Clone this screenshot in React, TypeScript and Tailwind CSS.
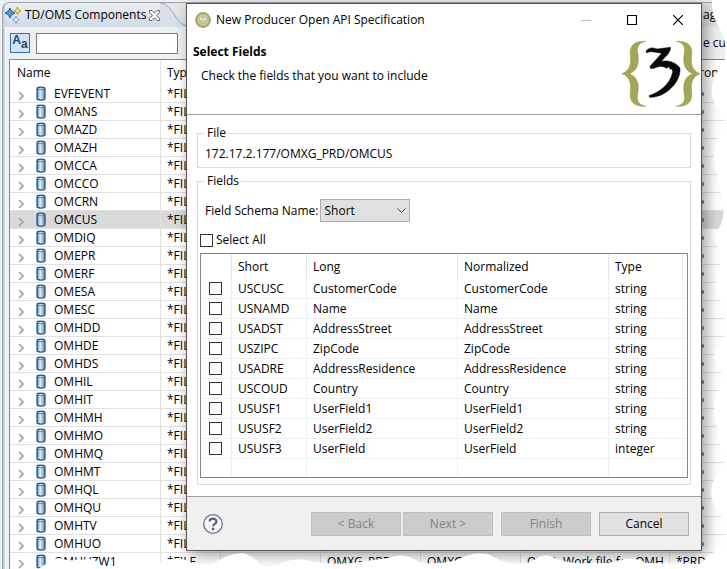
import { useState } from 'react';

const components = [
  'EVFEVENT', 'OMANS', 'OMAZD', 'OMAZH', 'OMCCA', 'OMCCO', 'OMCRN', 'OMCUS', 'OMDIQ',
  'OMEPR', 'OMERF', 'OMESA', 'OMESC', 'OMHDD', 'OMHDE', 'OMHDS', 'OMHIL', 'OMHIT',
  'OMHMH', 'OMHMO', 'OMHMQ', 'OMHMT', 'OMHQL', 'OMHQU', 'OMHTV', 'OMHUO', 'OMHUZW1',
];

const fields = [
  { short: 'USCUSC', long: 'CustomerCode', type: 'string' },
  { short: 'USNAMD', long: 'Name', type: 'string' },
  { short: 'USADST', long: 'AddressStreet', type: 'string' },
  { short: 'USZIPC', long: 'ZipCode', type: 'string' },
  { short: 'USADRE', long: 'AddressResidence', type: 'string' },
  { short: 'USCOUD', long: 'Country', type: 'string' },
  { short: 'USUSF1', long: 'UserField1', type: 'string' },
  { short: 'USUSF2', long: 'UserField2', type: 'string' },
  { short: 'USUSF3', long: 'UserField', type: 'integer' },
];

const checkCls = 'block w-[13px] h-[13px] shrink-0 appearance-none border border-[#333] bg-white checked:bg-[#333]';
const cellCls = 'border-r border-b border-[#e0e0e0] pl-1.5 whitespace-nowrap overflow-hidden';
const gridCls = 'border-r border-b border-[#ecf0f2] pl-1.5 whitespace-nowrap';
const buttonCls = 'w-[90px] h-6 border border-[#adadad] bg-[#e1e1e1] text-black disabled:border-[#bfbfbf] disabled:bg-[#cccccc] disabled:text-[#838383]';

function SparkIcon() {
  return (
    <svg width="17" height="18" viewBox="0 0 17 18" className="shrink-0">
      <path d="M5 2 L6.500 5 L10 7 L6.500 9 L5 12 L3.500 9 L0 7 L3.500 5 Z" fill="#5f93cc" stroke="#1f4f86" strokeWidth=".9" />
      <path d="M12.500 1 L13.500 3.500 L16 4.800 L13.500 6 L12.500 8.500 L11.500 6 L9 4.800 L11.500 3.500 Z" fill="#fbe48f" stroke="#b58a22" strokeWidth=".9" />
      <path d="M11 10 L12 12.500 L14.500 13.700 L12 15 L11 17.500 L10 15 L7.500 13.700 L10 12.500 Z" fill="#fff" stroke="#6a9cc9" strokeWidth=".9" />
    </svg>
  );
}

function CloseTabIcon() {
  return (
    <svg width="11" height="11" viewBox="0 0 11 11">
      <path d="M.5 .5 H3 L5.500 3.200 L8 .5 H10.500 V2.500 L7.700 5.500 L10.500 8.500 V10.500 H8 L5.500 7.800 L3 10.500 H.5 V8.500 L3.300 5.500 L.5 2.500 Z" fill="#fff" stroke="#555" strokeWidth=".9" />
    </svg>
  );
}

function FileIcon() {
  return (
    <svg width="10" height="15" viewBox="0 0 10 15" className="shrink-0">
      <defs>
        <linearGradient id="cyl">
          <stop offset="0" stopColor="#4f83b0" />
          <stop offset=".4" stopColor="#e2f0f8" />
          <stop offset="1" stopColor="#4f86b3" />
        </linearGradient>
      </defs>
      <path d="M1 2.500 C1 .6 9 .6 9 2.500 V12.500 C9 14.600 1 14.600 1 12.500 Z" fill="url(#cyl)" stroke="#234f7d" strokeWidth="1.200" />
      <path d="M1.500 3 C3 4 7 4 8.500 3" fill="none" stroke="#41719d" strokeWidth=".8" />
    </svg>
  );
}

function ExpandIcon() {
  return (
    <svg width="6" height="10" viewBox="0 0 6 10" className="shrink-0">
      <path d="M1 1 L5 5 L1 9" fill="none" stroke="#a2a2a2" strokeWidth="1.600" />
    </svg>
  );
}

function AppIcon() {
  return (
    <svg width="16" height="16" viewBox="0 0 16 16" className="shrink-0">
      <circle cx="8" cy="8" r="6.900" fill="#c6c99c" stroke="#a4a763" strokeWidth="2" />
      <path d="M4.500 5.500 C6 4.500 7.500 5.500 8 7.500 C8.500 5.500 10 4.500 11.500 5.500 C11.300 7.200 10.200 8.600 8.600 8.800 L9 11.500 H7 L7.400 8.800 C5.800 8.600 4.700 7.200 4.500 5.500 Z" fill="#f1f2e2" stroke="#a4a763" strokeWidth=".6" />
    </svg>
  );
}

const brace = 'M71 4 C39 3 22 15 25 44 C27 66 28 90 0 101 C28 112 27 136 25 158 C22 187 39 200 71 199 C53 194 43 186 47 164 C52 136 48 110 22 101 C48 92 52 66 47 38 C43 18 53 8 71 4 Z';

function Logo() {
  return (
    <svg width="78" height="68" viewBox="0 0 234 204" className="shrink-0">
      <g fill="#a6a555" stroke="#8f904c" strokeWidth="1.500">
        <path d={brace} />
        <path d={brace} transform="translate(234 0) scale(-1 1)" />
      </g>
      <path d="M72 33 C80 23 92 21 105 27 L145 22 C147 27 143 33 140 40 L118 64 C140 60 160 66 174 84 C177 112 156 142 130 158 C115 168 97 172 83 172 L81 167 C110 158 142 136 151 100 C154 90 150 86 144 87 L140 80 L134 85 C122 76 108 79 99 84 L86 86 L84 79 L119 40 L101 37 C90 33 80 36 73 38 Z" fill="#0a0a0a" stroke="#0a0a0a" strokeWidth="1.500" />
    </svg>
  );
}

// White paper with a ragged border, laid over the right and bottom sides
function TornEdges() {
  return (
    <>
      <svg className="absolute right-0 top-0 w-8 h-full pointer-events-none" viewBox="0 0 32 569" preserveAspectRatio="none">
        <path d="M17 0 C16 20 25 25 27 34 C31 42 32 54 29 62 C20 74 17 80 17 92 C18 106 26 112 30 119 C29 130 20 138 19 157 C20 170 27 185 26 200 Q31 214 26 224 Q19 236 22 244 Q28 260 24 270 Q18 284 23 294 Q29 308 30 327 Q31 340 20 352 Q18 358 25 368 Q30 380 23 391 Q17 402 20 416 Q23 440 29 458 Q32 466 20 477 Q13 494 20 508 Q29 516 31 534 L31 548 Q20 550 12 557 L0 569 H32 V0 Z" fill="#fff" />
      </svg>
      <svg className="absolute left-0 bottom-0 w-full h-[19px] pointer-events-none" viewBox="0 0 727 19" preserveAspectRatio="none">
        <path d="M38 19 L46 14 Q52 8 60 8 Q66 11 75 10 L94 9 Q100 18 118 18 Q140 15 160 12 Q175 6 186 10 Q202 18 214 13 Q230 3 242 3 Q252 5 260 14 Q268 20 280 14 Q295 7 310 11 Q330 15 352 13 L388 8 Q402 3 412 8 Q420 15 436 13 Q455 13 466 6 Q478 1 490 5 Q505 15 520 14 Q532 13 538 7 Q548 3 556 9 Q570 14 590 13 Q612 14 624 9 Q638 8 646 13 L700 14 Q712 8 727 0 V19 Z" fill="#fff" />
      </svg>
    </>
  );
}

function ComponentsView() {
  const [filter, setFilter] = useState('');

  return (
    <div className="pl-0.5 pt-0.5 bg-[#f0f0f0]">
      <div className="rounded-tl-lg border-l border-t border-[#9aa3ab] bg-[#c4d1de] pl-0.5 overflow-hidden">
        <div className="flex h-6 bg-[#e3e5e7]">
          <div className="flex items-center gap-[3px] bg-linear-to-b from-[#eceff2] to-[#cfdae6]">
            <SparkIcon />
            <h2>TD/OMS Components</h2>
            <button aria-label="Close view"><CloseTabIcon /></button>
          </div>
          <svg width="32" height="24" viewBox="0 0 32 24" className="shrink-0">
            <path d="M0 0 C13 0 15 24 32 24 H0 Z" fill="#d8e0e9" />
            <path d="M0 0 C13 0 15 24 32 24" fill="none" stroke="#9aa3ab" />
          </svg>
          <span className="ml-auto self-center w-6">ag</span>
        </div>

        <div className="flex items-center gap-1.5 h-8 border-l border-white bg-[#eef0f2] pl-1">
          <button aria-label="Match case" className="flex justify-center w-5 h-5 shrink-0 border border-[#2f6fae] bg-[#cfe3f5] text-[12px] leading-3 text-[#26425f] font-['Liberation_Sans',sans-serif] font-bold">
            <span>A</span>
            <span className="pt-1">a</span>
          </button>
          <input aria-label="Filter components" value={filter} onChange={e => setFilter(e.target.value)}
            className="w-[142px] h-[21px] border border-[#7a7a7a] bg-white px-1 outline-none" />
          <span className="ml-auto w-6 whitespace-nowrap">e cu</span>
        </div>

        <div className="border-l border-white bg-[#eef0f2] pl-[3px]">
          <div className="border-l border-t border-[#828790] bg-white">
            <table className="w-full table-fixed border-separate border-spacing-0">
              <colgroup>
                <col className="w-[151px]" />
                <col className="w-[60px]" />
                <col className="w-[100px]" />
                <col className="w-[100px]" />
                <col className="w-[100px]" />
                <col />
                <col className="w-[57px]" />
              </colgroup>
              <thead>
                <tr className="h-[25px] text-left">
                  <th className="border-r border-[#e5e5e5] pl-[7px] font-normal">Name</th>
                  <th className="border-r border-[#e5e5e5] pl-1.5 font-normal">Type</th>
                  <th /><th /><th /><th />
                  <th className="pl-1.5 font-normal">Environ</th>
                </tr>
              </thead>
              <tbody>
                {components.map((name, i) => {
                  const last = i === components.length - 1;
                  return (
                    <tr key={name} className={name === 'OMCUS' ? 'h-[18px] bg-[#d9d9d9]' : 'h-[18px]'}>
                      <td className="border-r border-b border-[#e0e0e0] pl-2">
                        <div className="flex items-center h-[17px]">
                          <span className="pt-1"><ExpandIcon /></span>
                          <span className="ml-3 mr-2"><FileIcon /></span>
                          {name}
                        </div>
                      </td>
                      <td className={cellCls}>*FILE</td>
                      <td className={cellCls}>{last && 'PF'}</td>
                      <td className={cellCls}>{last && 'OMXG_PRD'}</td>
                      <td className={cellCls}>{last && 'OMXG'}</td>
                      <td className={cellCls}>{last && <>OMH <span className="ml-1">Work file for OMH</span></>}</td>
                      <td className="border-b border-[#e0e0e0] pl-1.5">
                        {last ? '*PRD' : <span className="block w-[3px] h-1 ml-[25px] rounded-sm bg-[#4a94b8]" />}
                      </td>
                    </tr>
                  );
                })}
              </tbody>
            </table>
          </div>
        </div>
      </div>
    </div>
  );
}

function SpecificationDialog() {
  const [schema, setSchema] = useState('Short');
  const [checked, setChecked] = useState<string[]>([]);

  const toggle = (id: string) =>
    setChecked(c => (c.includes(id) ? c.filter(x => x !== id) : [...c, id]));
  const toggleAll = () =>
    setChecked(c => (c.length === fields.length ? [] : fields.map(f => f.short)));

  return (
    <div role="dialog" aria-labelledby="dialog-title"
      className="absolute left-[186px] right-[25px] top-[3px] border border-[#555] bg-white shadow-[4px_4px_14px_rgba(0,0,0,0.4)]">
      <div className="flex items-center h-[31px] pl-2">
        <AppIcon />
        <h1 id="dialog-title" className="ml-[5px]">New Producer Open API Specification</h1>
        <div className="ml-auto flex items-center gap-9 pr-[18px]">
          <button aria-label="Minimize" disabled>
            <svg width="10" height="10"><path d="M0 5.500 H10" stroke="#bbb" /></svg>
          </button>
          <button aria-label="Maximize">
            <svg width="10" height="10"><path d="M.5 .5 H9.500 V9.500 H.5 Z" fill="none" stroke="#000" strokeWidth="1.200" /></svg>
          </button>
          <button aria-label="Close">
            <svg width="10" height="10"><path d="M0 0 L10 10 M10 0 L0 10" stroke="#000" strokeWidth="1.200" /></svg>
          </button>
        </div>
      </div>

      <div className="flex justify-between h-20 border-b border-[#a0a0a0]">
        <div className="pl-1.5 pt-[9px]">
          <h2 className="font-bold">Select Fields</h2>
          <p className="pl-2 pt-2">Check the fields that you want to include</p>
        </div>
        <div className="pt-[5px] pr-px"><Logo /></div>
      </div>

      <div className="px-2.5 pt-2.5 pb-[11px] border-b border-[#a0a0a0]">
        <fieldset className="border border-[#dcdcdc] px-[7px] pb-[5px]">
          <legend className="px-0.5">File</legend>
          <p className="pt-[5px]">172.17.2.177/OMXG_PRD/OMCUS</p>
        </fieldset>

        <fieldset className="mt-[5px] border border-[#dcdcdc] px-0.5 pb-1.5">
          <legend className="ml-[5px] px-0.5">Fields</legend>
          <div className="flex items-center gap-0.5 pl-[5px] pt-2.5">
            <label htmlFor="schema">Field Schema Name:</label>
            <div className="relative">
              <select id="schema" value={schema} onChange={e => setSchema(e.target.value)}
                className="block w-[90px] h-[23px] appearance-none border border-[#adadad] bg-[#e1e1e1] pl-[3px]">
                <option>Short</option>
                <option>Long</option>
                <option>Normalized</option>
              </select>
              <svg width="9" height="6" viewBox="0 0 9 6" className="absolute right-1 top-[9px] pointer-events-none">
                <path d="M.5 .5 L4.500 4.500 L8.500 .5" fill="none" stroke="#444" />
              </svg>
            </div>
          </div>
          <label className="flex items-center gap-[3px] mt-2.5 w-fit">
            <input type="checkbox" className={checkCls} checked={checked.length === fields.length} onChange={toggleAll} />
            Select All
          </label>

          <div className="mt-[5px] border border-[#828790]">
            <table className="w-full table-fixed border-separate border-spacing-0">
              <colgroup>
                <col className="w-[31px]" />
                <col className="w-[75px]" />
                <col className="w-[151px]" />
                <col className="w-[151px]" />
                <col />
                <col className="w-1" />
              </colgroup>
              <thead>
                <tr className="h-[25px] text-left">
                  <th className="border-r border-[#e5e5e5]" />
                  {['Short', 'Long', 'Normalized', 'Type'].map(h => (
                    <th key={h} className="border-r border-[#e5e5e5] pl-1.5 font-normal">{h}</th>
                  ))}
                  <th />
                </tr>
              </thead>
              <tbody>
                {fields.map(f => (
                  <tr key={f.short} className="h-5">
                    <td className="border-r border-b border-[#ecf0f2] pl-2">
                      <input type="checkbox" aria-label={f.short} className={checkCls}
                        checked={checked.includes(f.short)} onChange={() => toggle(f.short)} />
                    </td>
                    <td className={gridCls}>{f.short}</td>
                    <td className={gridCls}>{f.long}</td>
                    <td className={gridCls}>{f.long}</td>
                    <td className={gridCls}>{f.type}</td>
                    <td className="border-b border-[#ecf0f2]" />
                  </tr>
                ))}
                <tr className="h-[18px]">
                  {fields.slice(0, 5).map(f => <td key={f.short} className="border-r border-[#ecf0f2]" />)}
                  <td />
                </tr>
              </tbody>
            </table>
          </div>
        </fieldset>
      </div>

      <div className="flex items-center bg-[#f0f0f0] pl-[15px] pr-3 pt-[15px] pb-3.5">
        <button aria-label="Help">
          <svg width="22" height="22" viewBox="0 0 22 22">
            <circle cx="11" cy="11" r="9.300" fill="#f7f8fb" stroke="#6d7590" strokeWidth="1.300" />
            <path d="M7.600 8.600 C7.600 4.600 14.400 4.600 14.400 8.400 C14.400 10.800 11.100 10.800 11.100 13.300" fill="none" stroke="#56607f" strokeWidth="2.200" />
            <circle cx="11.100" cy="16" r="1.400" fill="#56607f" />
          </svg>
        </button>
        <div className="ml-auto flex gap-2">
          <div className="flex gap-0.5">
            <button disabled className={buttonCls}>&lt; Back</button>
            <button disabled className={buttonCls}>Next &gt;</button>
          </div>
          <button disabled className={buttonCls}>Finish</button>
          <button className={buttonCls}>Cancel</button>
        </div>
      </div>
    </div>
  );
}

export default function App() {
  return (
    <div className="relative h-screen overflow-hidden bg-white text-[12px] leading-4 text-black font-['Open_Sans','Noto_Sans',sans-serif]">
      <ComponentsView />
      <SpecificationDialog />
      <TornEdges />
    </div>
  );
}
